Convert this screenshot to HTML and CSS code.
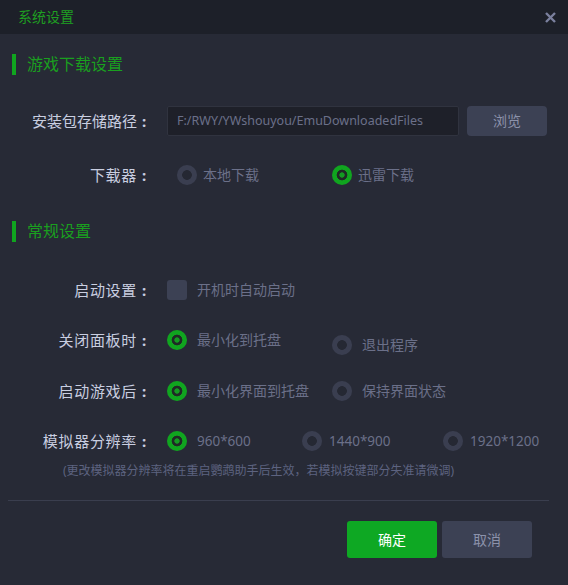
FILE: index.html
```html
<!DOCTYPE html>
<html lang="zh-CN">
<head>
  <meta charset="UTF-8" />
  <meta name="viewport" content="width=device-width, initial-scale=1.0">
  <title>系统设置</title>
  <link rel="stylesheet" href="styles.css">
</head>
<body>
  <div class="window">
    <div class="titlebar">
      <h1>系统设置</h1>
      <span class="close">
        <svg width="11" height="11" viewBox="0 0 11 11"><path d="M1 1L10 10M10 1L1 10" stroke="#7b809e" stroke-width="2.4" fill="none"/></svg>
      </span>
    </div>

    <div class="content">
      <div class="section-title">游戏下载设置</div>

      <div class="row row-path">
        <div class="label">安装包存储路径<span class="colon">:</span></div>
        <div class="path-input">F:/RWY/YWshouyou/EmuDownloadedFiles</div>
        <div class="btn-browse">浏览</div>
      </div>

      <div class="row row-downloader">
        <div class="label">下载器<span class="colon">:</span></div>
        <div class="options opts-dl">
          <div class="option w155"><span class="radio"></span><span class="opt-text">本地下载</span></div>
          <div class="option"><span class="radio on"></span><span class="opt-text">迅雷下载</span></div>
        </div>
      </div>

      <div class="section-title second">常规设置</div>

      <div class="row row-startup">
        <div class="label">启动设置<span class="colon">:</span></div>
        <div class="options">
          <div class="option"><span class="checkbox"></span><span class="opt-text">开机时自动启动</span></div>
        </div>
      </div>

      <div class="row row-close">
        <div class="label">关闭面板时<span class="colon">:</span></div>
        <div class="options">
          <div class="option w165"><span class="radio on"></span><span class="opt-text">最小化到托盘</span></div>
          <div class="option lower"><span class="radio"></span><span class="opt-text">退出程序</span></div>
        </div>
      </div>

      <div class="row row-game">
        <div class="label">启动游戏后<span class="colon">:</span></div>
        <div class="options">
          <div class="option w165"><span class="radio on"></span><span class="opt-text">最小化界面到托盘</span></div>
          <div class="option"><span class="radio"></span><span class="opt-text">保持界面状态</span></div>
        </div>
      </div>

      <div class="row row-res">
        <div class="label">模拟器分辨率<span class="colon">:</span></div>
        <div class="options">
          <div class="option w135"><span class="radio on"></span><span class="opt-text">960*600</span></div>
          <div class="option w141 tight"><span class="radio"></span><span class="opt-text">1440*900</span></div>
          <div class="option tight"><span class="radio"></span><span class="opt-text">1920*1200</span></div>
        </div>
      </div>

      <p class="note">(更改模拟器分辨率将在重启鹦鹉助手后生效，若模拟按键部分失准请微调)</p>

      <div class="divider"></div>

      <div class="footer">
        <div class="btn btn-ok">确定</div>
        <div class="btn btn-cancel">取消</div>
      </div>
    </div>
  </div>
</body>
</html>
```

FILE: styles.css
```css
* { margin: 0; padding: 0; box-sizing: border-box; }
body {
  background: #272a36;
  font-family: "Noto Sans", "Noto Sans CJK SC", sans-serif;
}
.window {
  width: 568px;
  height: 585px;
  background: #272a36;
  display: flex;
  flex-direction: column;
}
.titlebar {
  height: 34px;
  background: #1d2029;
  display: flex;
  align-items: center;
  justify-content: space-between;
  padding: 0 12px 0 18px;
}
.titlebar h1 {
  font-size: 14px;
  font-weight: normal;
  line-height: 20px;
  color: #1f9f22;
}
.close { display: flex; }

.section-title {
  margin: 20px 0 0 12px;
  height: 21px;
  border-left: 4px solid #10a51f;
  padding-left: 11px;
  font-size: 16px;
  line-height: 21px;
  color: #1a9f1f;
}
.section-title.second { margin-top: 36px; }

.row { display: flex; align-items: center; }
.label {
  width: 151px;
  flex-shrink: 0;
  text-align: right;
  font-size: 15px;
  letter-spacing: 0.7px;
  line-height: 20px;
  color: #c9cee0;
}
.colon {
  display: inline-block;
  width: 14px;
  text-align: center;
  font-weight: bold;
  letter-spacing: 0;
}
.row-path { margin-top: 31px; height: 30px; }
.row-path .label { letter-spacing: 0; }
.path-input {
  margin-left: 16px;
  width: 292px;
  height: 30px;
  background: #1e2029;
  border: 1px solid #30333f;
  border-radius: 2px;
  padding-left: 9px;
  font-size: 12.5px;
  line-height: 28px;
  color: #6b7089;
}
.btn-browse {
  margin-left: 8px;
  width: 80px;
  height: 30px;
  background: #3c4154;
  border-radius: 4px;
  text-align: center;
  font-size: 14px;
  line-height: 30px;
  color: #8c92ab;
}

.row-downloader { margin-top: 29px; }
.row-startup { margin-top: 38px; }
.row-close { margin-top: 30px; align-items: flex-start; }
.row-game { margin-top: 26px; }
.row-res { margin-top: 30px; }

.options { display: flex; margin-left: 16px; align-items: flex-start; }
.opts-dl { margin-left: 26px; }
.option { display: flex; align-items: center; gap: 10px; height: 20px; }
.opts-dl .option { gap: 6px; }
.option.tight { gap: 7px; }
.option.lower { margin-top: 5px; }
.w155 { width: 155px; }
.w165 { width: 165px; }
.w135 { width: 135px; }
.w141 { width: 141px; }
.opt-text {
  font-size: 14px;
  line-height: 20px;
  color: #6b7089;
  white-space: nowrap;
}
.row-res .opt-text { font-size: 13.5px; }
.radio {
  width: 20px;
  height: 20px;
  flex-shrink: 0;
  border-radius: 50%;
  background: radial-gradient(circle, #252833 0 4.5px, #3a3e50 5.2px);
}
.radio.on {
  background: radial-gradient(circle, #149a22 0 2.3px, #1f2a25 3px 5px, #10a51f 5.7px);
}
.checkbox {
  width: 20px;
  height: 20px;
  flex-shrink: 0;
  border-radius: 3px;
  background: #3c4154;
}

.note {
  margin: 12px 0 0 63px;
  font-size: 12px;
  line-height: 16px;
  color: #5d6380;
  white-space: nowrap;
}
.divider {
  margin: 21px 0 0 8px;
  width: 541px;
  height: 1px;
  background: #3a3e4e;
}
.footer {
  margin-top: 20px;
  display: flex;
  justify-content: flex-end;
  gap: 5px;
  padding-right: 36px;
}
.btn {
  width: 90px;
  height: 37px;
  border-radius: 3px;
  text-align: center;
  font-size: 14px;
  line-height: 37px;
}
.btn-ok { background: #0ea823; color: #ffffff; }
.btn-cancel { background: #3c4154; color: #8c92ab; }
```
